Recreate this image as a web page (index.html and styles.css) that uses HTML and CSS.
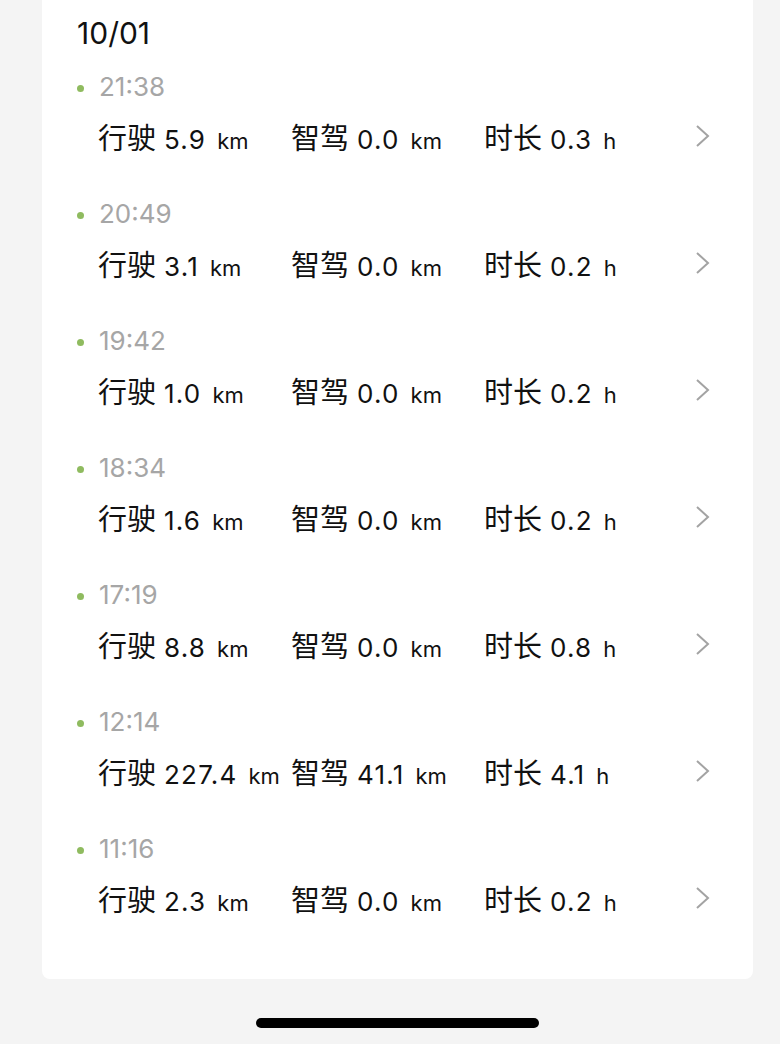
FILE: index.html
```html
<!DOCTYPE html>
<html lang="zh-CN">
    <head>
        <meta charset="UTF-8">
        <title>行程记录</title>
        <link rel="stylesheet" href="styles.css">
    </head>
    <body>
        <div class="card">
            <div class="date">10/01</div>
            <ul class="trips">
                <li class="trip">
                    <div class="time"><span class="dot"></span>21:38</div>
                    <div class="stats">
                        <span class="stat"><span class="label">行驶</span><span class="num">5.9</span><span class="unit">km</span></span>
                        <span class="stat"><span class="label">智驾</span><span class="num">0.0</span><span class="unit">km</span></span>
                        <span class="stat"><span class="label">时长</span><span class="num">0.3</span><span class="unit">h</span></span>
                        <svg class="chev" viewBox="0 0 16 24"><path d="M2 2 L13 12 L2 22"/></svg>
                    </div>
                </li>
                <li class="trip">
                    <div class="time"><span class="dot"></span>20:49</div>
                    <div class="stats">
                        <span class="stat"><span class="label">行驶</span><span class="num">3.1</span><span class="unit">km</span></span>
                        <span class="stat"><span class="label">智驾</span><span class="num">0.0</span><span class="unit">km</span></span>
                        <span class="stat"><span class="label">时长</span><span class="num">0.2</span><span class="unit">h</span></span>
                        <svg class="chev" viewBox="0 0 16 24"><path d="M2 2 L13 12 L2 22"/></svg>
                    </div>
                </li>
                <li class="trip">
                    <div class="time"><span class="dot"></span>19:42</div>
                    <div class="stats">
                        <span class="stat"><span class="label">行驶</span><span class="num">1.0</span><span class="unit">km</span></span>
                        <span class="stat"><span class="label">智驾</span><span class="num">0.0</span><span class="unit">km</span></span>
                        <span class="stat"><span class="label">时长</span><span class="num">0.2</span><span class="unit">h</span></span>
                        <svg class="chev" viewBox="0 0 16 24"><path d="M2 2 L13 12 L2 22"/></svg>
                    </div>
                </li>
                <li class="trip">
                    <div class="time"><span class="dot"></span>18:34</div>
                    <div class="stats">
                        <span class="stat"><span class="label">行驶</span><span class="num">1.6</span><span class="unit">km</span></span>
                        <span class="stat"><span class="label">智驾</span><span class="num">0.0</span><span class="unit">km</span></span>
                        <span class="stat"><span class="label">时长</span><span class="num">0.2</span><span class="unit">h</span></span>
                        <svg class="chev" viewBox="0 0 16 24"><path d="M2 2 L13 12 L2 22"/></svg>
                    </div>
                </li>
                <li class="trip">
                    <div class="time"><span class="dot"></span>17:19</div>
                    <div class="stats">
                        <span class="stat"><span class="label">行驶</span><span class="num">8.8</span><span class="unit">km</span></span>
                        <span class="stat"><span class="label">智驾</span><span class="num">0.0</span><span class="unit">km</span></span>
                        <span class="stat"><span class="label">时长</span><span class="num">0.8</span><span class="unit">h</span></span>
                        <svg class="chev" viewBox="0 0 16 24"><path d="M2 2 L13 12 L2 22"/></svg>
                    </div>
                </li>
                <li class="trip">
                    <div class="time"><span class="dot"></span>12:14</div>
                    <div class="stats">
                        <span class="stat"><span class="label">行驶</span><span class="num">227.4</span><span class="unit">km</span></span>
                        <span class="stat"><span class="label">智驾</span><span class="num">41.1</span><span class="unit">km</span></span>
                        <span class="stat"><span class="label">时长</span><span class="num">4.1</span><span class="unit">h</span></span>
                        <svg class="chev" viewBox="0 0 16 24"><path d="M2 2 L13 12 L2 22"/></svg>
                    </div>
                </li>
                <li class="trip">
                    <div class="time"><span class="dot"></span>11:16</div>
                    <div class="stats">
                        <span class="stat"><span class="label">行驶</span><span class="num">2.3</span><span class="unit">km</span></span>
                        <span class="stat"><span class="label">智驾</span><span class="num">0.0</span><span class="unit">km</span></span>
                        <span class="stat"><span class="label">时长</span><span class="num">0.2</span><span class="unit">h</span></span>
                        <svg class="chev" viewBox="0 0 16 24"><path d="M2 2 L13 12 L2 22"/></svg>
                    </div>
                </li>
            </ul>
        </div>
        <div class="home-bar"></div>
    </body>
</html>
```

FILE: styles.css
```css
body{
    margin: 0;
    background: #f4f4f4;
    font-family: Inter, "Noto Sans CJK SC", sans-serif;
    color: #111;
}
.card{
    margin: 0 27px 0 42px;
    padding: 13px 42px 21px 35px;
    background: #fff;
    border-radius: 0 0 8px 8px;
}
.date{
    font-size: 30px;
    line-height: 40px;
    color: #111;
}
.trips{
    list-style: none;
    margin: 16px 0 0;
    padding: 0;
}
.trip{
    padding-bottom: 31px;
}
.time{
    display: flex;
    align-items: center;
    font-size: 26px;
    line-height: 36px;
    color: #a6a6a6;
}
.dot{
    width: 7px;
    height: 7px;
    margin: 3px 15px 0 0;
    border-radius: 50%;
    background: #8fbb5f;
}
.stats{
    display: grid;
    grid-template-columns: 193px 193px 1fr 16px;
    align-items: center;
    margin: 7px 0 0 21px;
}
.stat{
    font-size: 26px;
    line-height: 48px;
    white-space: nowrap;
}
.label{
    font-family: "Noto Sans CJK SC", sans-serif;
    font-size: 29px;
}
.num{
    margin: 0 11px 0 8px;
    letter-spacing: 1.2px;
}
.unit{
    font-size: 22px;
}
.chev{
    width: 16px;
    height: 24px;
    margin-top: -6px;
}
.chev path{
    fill: none;
    stroke: #a3a3a3;
    stroke-width: 2;
}
.home-bar{
    width: 283px;
    height: 10px;
    margin: 39px 0 0 256px;
    border-radius: 5px;
    background: #000;
}
```
